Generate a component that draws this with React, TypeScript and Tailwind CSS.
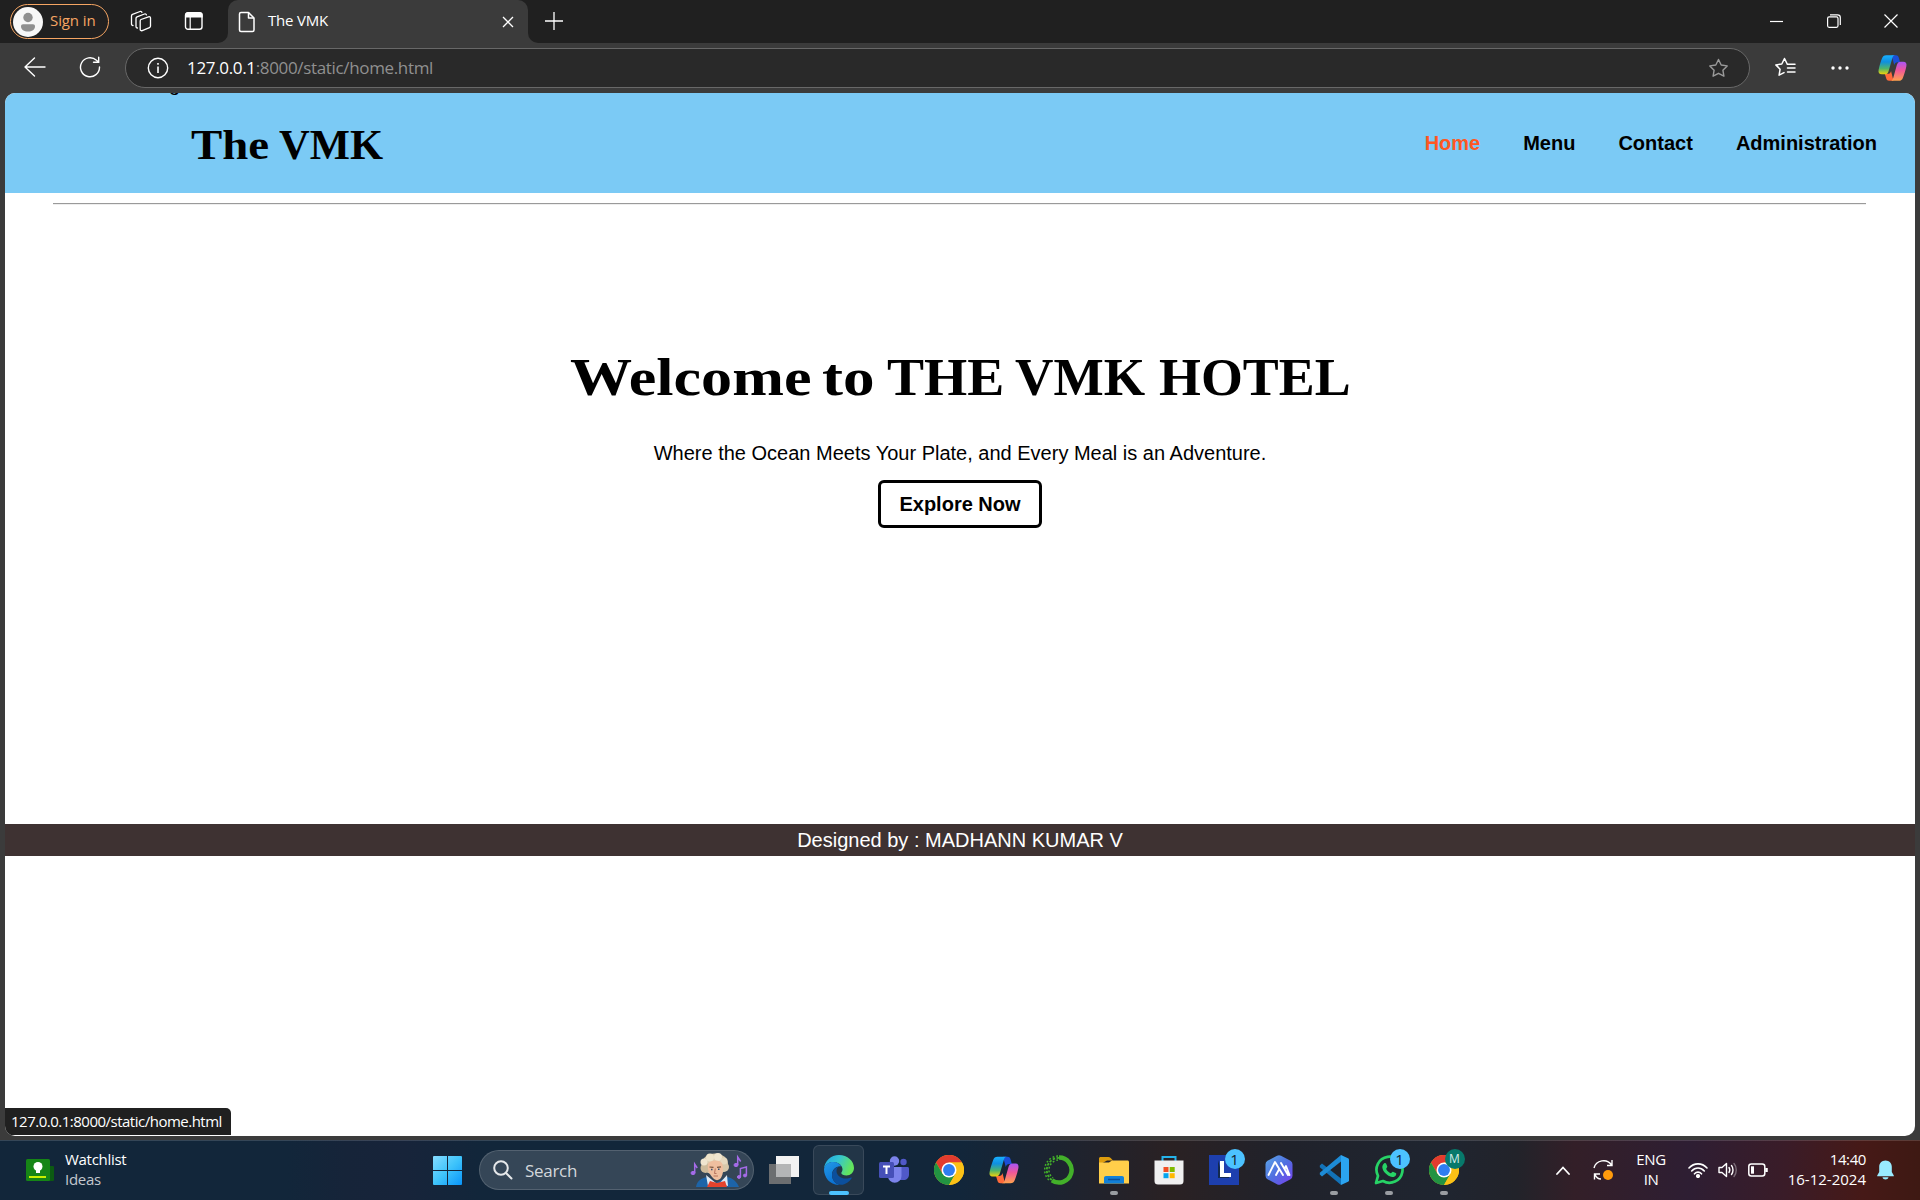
import React from "react";

const UI = "font-['Open_Sans','Noto_Sans',sans-serif]";

function Copilot({ id, className }: { id: string; className: string }) {
  return (
    <svg viewBox="0 0 30 28" className={className}>
      <defs>
        <linearGradient id={id + "a"} x1="0" y1="0" x2="0" y2="1">
          <stop offset="0" stopColor="#18b0ff" />
          <stop offset=".35" stopColor="#0f8fe0" />
          <stop offset=".7" stopColor="#4fb56a" />
          <stop offset="1" stopColor="#f0d20a" />
        </linearGradient>
        <linearGradient id={id + "b"} x1="0" y1="0" x2="0" y2="1">
          <stop offset="0" stopColor="#a855f7" />
          <stop offset=".45" stopColor="#f0569a" />
          <stop offset="1" stopColor="#ffa24d" />
        </linearGradient>
      </defs>
      <path d="M14 .8h4.500c2 0 2.700 1 3.200 3L22.800 8h-2.500c-2 0-3 1-3.500 3z" fill="#1b4fd8" />
      <path d="M16 27.200h-4.500c-2 0-2.700-1-3.200-3L7 20h3c2 0 3-1 3.500-3z" fill="#ff6a3a" />
      <path d="M8.500.8H18c-2 0-2.600 1.200-3.200 3.200l-3.800 13c-.7 2.300-1.700 3.500-4 3.500H4c-3 0-4-1.800-3.300-5C1.700 11 3 7 4.200 4 5 1.800 6.200.8 8.500.8z" fill={"url(#" + id + "a)"} />
      <path d="M21.500 27.200H12.500c2 0 2.700-1.200 3.300-3.200L19.500 11c.7-2.300 1.700-3.500 4-3.500H26c3 0 4 1.800 3.300 5-1 4.500-2.200 8.500-3.500 11.500-.9 2.200-2 3.200-4.300 3.200z" fill={"url(#" + id + "b)"} />
    </svg>
  );
}

function Chrome() {
  return (
    <svg viewBox="0 0 48 48" className="size-[30px]">
      <circle cx="24" cy="24" r="24" fill="#fbc116" />
      <path d="M24 12h20.800A24 24 0 0 0 3.200 12L13.600 30z" fill="#e33b2e" />
      <path d="M3.200 12A24 24 0 0 0 24 48L34.400 30 24 34 13.600 30z" fill="#229342" />
      <path d="M24 48A24 24 0 0 0 44.800 12H24l10.400 18z" fill="#fbc116" />
      <circle cx="24" cy="24" r="12" fill="#fff" />
      <circle cx="24" cy="24" r="9.500" fill="#2f7df0" />
    </svg>
  );
}

function Edge() {
  return (
    <svg viewBox="0 0 30 30" className="size-[30px]">
      <defs>
        <linearGradient id="eg1" x1="0" y1="0" x2="1" y2=".35">
          <stop offset="0" stopColor="#1fa5e6" />
          <stop offset=".5" stopColor="#35c5d0" />
          <stop offset="1" stopColor="#63e45c" />
        </linearGradient>
        <linearGradient id="eg2" x1="0" y1="0" x2=".5" y2="1">
          <stop offset="0" stopColor="#2299e8" />
          <stop offset="1" stopColor="#0a6fd0" />
        </linearGradient>
      </defs>
      <path d="M0 14C.5 6 7 0 15 0c8.500 0 15 6 15 13 0 4.500-3.500 7.500-7.500 7.500-3 0-5.200-1-5.200-2.400 0-1 1.200-1.500 1.200-3.600C18.500 10 14 7 9 7c-4.500 0-8 3-9 7z" fill="url(#eg1)" />
      <path d="M0 14C1 9.500 5 7 9 7c4 0 7 1.800 8.500 4.500-5 -1-9.500 3-9.500 8.500 0 4.500 3 8.500 7.500 10C6.500 30.300 0 23 0 14z" fill="url(#eg2)" />
      <path d="M14.500 11.500C11 13 8 16 8 20c0 5 4 9.800 9 9.800 4.500-.3 8.500-3 10.600-6.600.4-.7-.2-1-.7-.7-1.500.8-3.200 1.100-4.900 1.100-5.500 0-9.500-3.600-9.500-7.600 0-1.800.8-3.400 2-4.500z" fill="#0c4f9c" />
    </svg>
  );
}

function Teams() {
  return (
    <svg viewBox="0 0 30 28" className="h-[28px] w-[30px]">
      <circle cx="24.500" cy="6" r="3.200" fill="#5059c9" />
      <circle cx="15.500" cy="5" r="4.700" fill="#7b83eb" />
      <path d="M21 11h7.500c.8 0 1.500.7 1.500 1.500v6c0 3.500-2.400 5.500-5.500 5.500H21z" fill="#5059c9" />
      <path d="M9 11h13.500v9a6.700 6.700 0 0 1-13.500 0z" fill="#7b83eb" />
      <rect x="0" y="6" width="15" height="16" rx="1.500" fill="#4650b8" />
      <path d="M4 10.500h7M7.500 10.500v7.500" stroke="#fff" strokeWidth="2" />
    </svg>
  );
}

function Anaconda() {
  return (
    <svg viewBox="0 0 30 30" className="size-[30px]">
      <path d="M15 2.500A12.500 12.500 0 1 1 8 25.300" fill="none" stroke="#43b02a" strokeWidth="4.500" />
      <path d="M15 2.800A12.200 12.200 0 0 0 8 25" fill="none" stroke="#43b02a" strokeWidth="1.800" strokeDasharray="2.500 1.500" />
      <path d="M14 1A14 14 0 0 0 6 26M14 5A10 10 0 0 0 9 23" fill="none" stroke="#43b02a" strokeWidth="1.500" strokeDasharray="1.800 2" />
    </svg>
  );
}

function Folder() {
  return (
    <svg viewBox="0 0 30 28" className="h-[28px] w-[30px]">
      <path d="M0 2.500C0 1.500.8 1 1.800 1h7.500c1 0 1.700.3 2.400 1L14 4.500h-6L0 9z" fill="#dd9c0d" />
      <path d="M0 6.500h10L13 4.500h15.500c.9 0 1.500.6 1.500 1.500v21.500H0z" fill="#ffce4a" />
      <path d="M5 22c0-1.200.8-2 2-2h16c1.200 0 2 .8 2 2v5.500H5z" fill="#1280d8" />
      <path d="M9 23.500h12" stroke="#0a4f9a" strokeWidth="1.500" />
    </svg>
  );
}

function Store() {
  return (
    <svg viewBox="0 0 30 30" className="size-[30px]">
      <path d="M8.500 6V2h13v4" fill="none" stroke="#25b3ea" strokeWidth="2" />
      <path d="M.5 5.500h29V26a3.500 3.500 0 0 1-3.500 3.500H4A3.500 3.500 0 0 1 .5 26z" fill="#f0f0f0" />
      <path d="M9.500 12H14.500v5h-5z" fill="#f04e23" />
      <path d="M15.700 12h5v5h-5z" fill="#7fba00" />
      <path d="M9.500 18.200h5v5h-5z" fill="#05a4ef" />
      <path d="M15.700 18.200h5v5h-5z" fill="#ffb902" />
    </svg>
  );
}

function Lens() {
  return (
    <svg viewBox="0 0 30 30" className="size-[30px]">
      <path d="M0 0h30v30H0z" fill="#1d3fae" />
      <path d="M9 5v18h11v-3.500H13z" fill="#132a4e" />
      <path d="M11 6h4v12h7v4H11z" fill="#fff" />
    </svg>
  );
}

function Hexa() {
  return (
    <svg viewBox="0 0 30 30" className="size-[30px]">
      <defs>
        <linearGradient id="hx" x1="0" y1="0" x2="1" y2="1">
          <stop offset="0" stopColor="#5ca8e8" />
          <stop offset=".5" stopColor="#4f6fe0" />
          <stop offset="1" stopColor="#7a3ff0" />
        </linearGradient>
      </defs>
      <path d="M13 .8a4 4 0 0 1 4 0l9.500 5a4 4 0 0 1 2 3.500v11.400a4 4 0 0 1-2 3.500l-9.500 5a4 4 0 0 1-4 0l-9.500-5a4 4 0 0 1-2-3.500V9.300a4 4 0 0 1 2-3.500z" fill="url(#hx)" />
      <path d="m4.500 20 6.500-13 8 13M12 20l3-5.500M17 8l7 12M20.500 14l1.500-3 3.500 9" fill="none" stroke="#fff" strokeWidth="1.900" strokeLinejoin="round" strokeLinecap="round" />
    </svg>
  );
}

function Code() {
  return (
    <svg viewBox="0 0 30 30" className="size-[30px]">
      <path d="M.8 10.500 3 8.600l19 14.900V30L.8 12.300z" fill="#1272b8" />
      <path d="M.8 19.500 3 21.400 22 6.500V0L.8 17.700z" fill="#1d8bd6" />
      <path d="M22 0l7 3.200c.6.300 1 .8 1 1.500v20.600c0 .7-.4 1.200-1 1.500L22 30z" fill="#2ba4f0" />
    </svg>
  );
}

function Whatsapp() {
  return (
    <svg viewBox="0 0 30 30" className="size-[30px]">
      <path d="M2 28l2-7.200A13 13 0 1 1 9 26z" fill="none" stroke="#27d366" strokeWidth="2.700" strokeLinejoin="round" />
      <path d="M10 8.500c.8-.8 1.800-.6 2.200.3l1.100 2.600c.3.700-1.300 2-1.100 2.500 1 2 2.500 3.400 4.500 4.300.6.200 1.600-1.800 2.200-1.500l2.800 1.300c.7.400.7 1 .3 1.900-.7 1.500-2.300 2.200-3.900 2-5-.7-9.500-5.500-9.800-9.600 0-1.500.6-2.800 1.700-3.800z" fill="#27d366" />
    </svg>
  );
}

function Composer() {
  return (
    <svg viewBox="0 0 58 34" className="h-[34px] w-[58px]">
      <path d="M6 34c1-6 5-9 11-10l9 6 11-6c6 1 10 5 12 10z" fill="#1d64a8" />
      <path d="M16 22l11 9-9 2zM37 22l-8 9 9 2z" fill="#dfeaf5" />
      <path d="M20 28l7 2 8-2 2 6H17z" fill="#e5432d" />
      <ellipse cx="25" cy="11" rx="13" ry="10.500" fill="#dccdb0" />
      <circle cx="15.500" cy="15" r="5" fill="#cdbb9b" />
      <circle cx="34" cy="14" r="5" fill="#d8c8aa" />
      <circle cx="20" cy="4.500" r="4" fill="#eee3ca" />
      <circle cx="28" cy="4" r="4" fill="#efe5cf" />
      <circle cx="14" cy="9" r="3.500" fill="#efe5cf" />
      <circle cx="34" cy="8" r="3.500" fill="#e6d9bf" />
      <path d="M18 11c2-4 10-5 14-1 2 6 1 13-2 16-2 1.500-4 1.500-6 0-4-4-7-8-6-15z" fill="#efbf9f" />
      <path d="M19.500 14l4 .4M27 14.400l4-.6" stroke="#75513c" strokeWidth="1.200" />
      <path d="M21 16.500h1.500M28 16.300h1.500" stroke="#375070" strokeWidth="1.400" />
      <path d="M25.300 15.500l-.8 5H26.500M23.500 23h4.500" stroke="#b9745d" strokeWidth="1" fill="none" />
      <g fill="#a56be8" stroke="#a56be8">
        <ellipse cx="3" cy="20" rx="2" ry="1.600" />
        <path d="M4.700 20v-9l2.500 4" fill="none" strokeWidth="1.500" />
        <ellipse cx="46" cy="12" rx="2" ry="1.600" />
        <path d="M47.700 12V4l3 4.500" fill="none" strokeWidth="1.500" />
        <ellipse cx="49" cy="24" rx="1.600" ry="1.400" />
        <ellipse cx="55" cy="22.500" rx="1.600" ry="1.400" />
        <path d="M50.400 24v-8.500l6-1.500v8.500" fill="none" strokeWidth="1.500" />
      </g>
    </svg>
  );
}

function TaskItem({ children, running, active }: { children?: React.ReactNode; running?: boolean; active?: boolean }) {
  return (
    <div className="relative flex h-[57px] w-[55px] items-center justify-center">
      {active && <div className="absolute left-[2px] top-[3px] h-[50px] w-[51px] rounded-md border border-white/10 bg-white/[0.07]" />}
      <div className="relative flex">{children}</div>
      {active && <div className="absolute bottom-[4px] h-[4px] w-[20px] rounded-full bg-[#4cc2ff]" />}
      {running && <div className="absolute bottom-[4px] h-[4px] w-[8px] rounded-full bg-[#9a9da2]" />}
    </div>
  );
}

function Count() {
  return (
    <span className="absolute -top-[6px] left-[16px] flex size-[20px] items-center justify-center rounded-full bg-[#4cc2ff] text-[15px] leading-none text-[#10202c]">
      1
    </span>
  );
}

function TabStrip() {
  return (
    <div className="flex h-[43px] shrink-0 bg-[#202020] text-white">
      <div className="ml-[10px] mt-[4px] flex h-[35px] w-[99px] items-center rounded-full border-[1.500px] border-[#f5a563] pl-[2px]">
        <svg viewBox="0 0 30 30" className="size-[30px]">
          <circle cx="15" cy="15" r="15" fill="#f7f7f7" />
          <circle cx="15" cy="10.500" r="4.700" fill="#8f8f8f" />
          <path d="M8 19.500c0-1.400.8-2.200 2-2.200h10c1.200 0 2 .8 2 2.200 0 3-3 5-7 5s-7-2-7-5z" fill="#8f8f8f" />
        </svg>
        <span className="-mt-[2px] ml-[7px] text-[15px] leading-none tracking-[-0.1px] text-[#f5a563]">Sign in</span>
      </div>
      <svg viewBox="0 0 22 22" className="ml-[21px] mr-px mt-[10px] size-[22px] fill-none stroke-white" strokeWidth="1.300" strokeLinejoin="round" strokeLinecap="round">
        <path d="m11 9.500 7.500-2.700c1-.3 2 .2 2 1.200v8c0 .8-.3 1.300-1 1.600l-7.300 3c-1 .4-2-.2-2-1.200v-8.200c0-.8.1-1.400.8-1.700z" />
        <path d="M7.500 18C6.500 18 6 17.300 6 16.400V8.500c0-.8.300-1.400 1-1.700L14.500 4c.8-.3 1.700 0 1.900.8" />
        <path d="M3 15.500c-1 0-1.500-.7-1.500-1.600V6c0-.8.300-1.400 1-1.700L10 1.500c.8-.3 1.700 0 1.900.8" />
      </svg>
      <svg viewBox="0 0 20 20" className="ml-[31px] mt-[11px] size-[20px] fill-none stroke-white" strokeWidth="1.400">
        <rect x="1.500" y="1.800" width="16.500" height="16.500" rx="2.500" />
        <path d="M2 3.500C2 2.500 3 2 4 2h11.500c1.500 0 2.500.8 2.500 2v1.800H2z" fill="white" />
        <path d="M6.200 6v12" strokeWidth="1.200" />
      </svg>
      <div className="ml-[14px] flex h-[43px] w-[10px] items-end bg-[#3b3b3b]">
        <div className="h-full w-full rounded-br-[10px] bg-[#202020]" />
      </div>
      <div className="flex h-[43px] w-[300px] items-center rounded-t-[10px] bg-[#3b3b3b] pl-[10px]">
        <svg viewBox="0 0 18 22" className="h-[22px] w-[18px] fill-none stroke-white" strokeWidth="1.500" strokeLinejoin="round">
          <path d="M3 1.500h7.500L16 7v12c0 1-.6 1.500-1.500 1.500H3c-1 0-1.500-.6-1.500-1.500V3c0-1 .6-1.500 1.500-1.500z" />
          <path d="M10.500 1.500V7H16" />
        </svg>
        <span className="-mt-[2px] ml-[12px] w-[234px] text-[15px] leading-none tracking-[-0.2px]">The VMK</span>
        <svg viewBox="0 0 12 12" className="size-[12px] stroke-white" strokeWidth="1.300">
          <path d="m1 1 10 10M11 1 1 11" />
        </svg>
      </div>
      <div className="h-[43px] w-[10px] bg-[#3b3b3b]">
        <div className="h-full w-full rounded-bl-[10px] bg-[#202020]" />
      </div>
      <svg viewBox="0 0 18 18" className="ml-[7px] mt-[12px] size-[18px] stroke-white" strokeWidth="1.300">
        <path d="M9 0v18M0 9h18" />
      </svg>
      <div className="ml-auto mr-[22px] flex h-[42px] items-center">
        <svg viewBox="0 0 14 14" className="size-[14px] stroke-white" strokeWidth="1.200"><path d="M0 7.500h13" /></svg>
        <svg viewBox="0 0 14 14" className="ml-[43px] size-[14px] fill-none stroke-white" strokeWidth="1.200">
          <rect x=".6" y="2.900" width="10.400" height="10.400" rx="1.500" />
          <path d="M3 .8h7.500C12.300.8 13.300 1.800 13.300 3.500V11" />
        </svg>
        <svg viewBox="0 0 14 14" className="ml-[43px] size-[14px] stroke-white" strokeWidth="1.200"><path d="m.5.5 13 13M13.500.5l-13 13" /></svg>
      </div>
    </div>
  );
}

const STAR = "M10.500 1.500 13.200 7l6 .9-4.300 4.300 1 6-5.400-2.900-5.400 2.900 1-6L1.800 7.900l6-.9z";

function Toolbar() {
  return (
    <div className="flex h-[50px] shrink-0 bg-[#3b3b3b]">
      <svg viewBox="0 0 22 20" className="ml-[24px] mt-[14px] h-[20px] w-[22px] fill-none stroke-white" strokeWidth="1.400" strokeLinecap="round" strokeLinejoin="round">
        <path d="M10.500 1 1 10l9.500 9M1 10h20" />
      </svg>
      <svg viewBox="0 0 22 22" className="ml-[33px] mt-[13px] size-[22px] fill-none stroke-white" strokeWidth="1.400" strokeLinecap="round">
        <path d="M20.500 11A9.500 9.500 0 1 1 17.500 4.300L19.500 6M19.700 1.200V6.300H14.500" />
      </svg>
      <div className="ml-[24px] mt-[5px] flex h-[40px] w-[1625px] items-center rounded-full border border-[#686868] bg-[#292929] pl-[21px] pr-[20px]">
        <svg viewBox="0 0 22 22" className="size-[22px] fill-none stroke-white" strokeWidth="1.400">
          <circle cx="11" cy="11" r="9.700" />
          <path d="M11 9.500V16M11 6v1.800" strokeWidth="1.600" />
        </svg>
        <span className="-mt-[2px] ml-[18px] text-[17px] leading-none tracking-[-0.34px] text-[#909090]"><span className="text-white">127.0.0.1</span>:8000/static/home.html</span>
        <svg viewBox="0 0 21 20" className="ml-auto h-[20px] w-[21px] fill-none stroke-[#9a9a9a]" strokeWidth="1.400" strokeLinejoin="round"><path d={STAR} /></svg>
      </div>
      <svg viewBox="0 0 22 20" className="ml-[24px] mt-[14px] h-[20px] w-[22px] fill-none stroke-white" strokeWidth="1.500" strokeLinejoin="round" strokeLinecap="round">
        <path d="M13.200 7 10.500 1.500 7.800 7l-6 .9 4.300 4.300-1 6L10 15.600M13.500 11H21M13.500 15H21M13.200 7.200H21" />
      </svg>
      <svg viewBox="0 0 18 4" className="ml-[35px] mt-[23px] h-[4px] w-[18px] fill-white">
        <circle cx="2" cy="2" r="1.700" /><circle cx="9" cy="2" r="1.700" /><circle cx="16" cy="2" r="1.700" />
      </svg>
      <Copilot id="ct" className="ml-[29px] mt-[11px] h-[28px] w-[29px]" />
    </div>
  );
}

function Page() {
  return (
    <main className="relative mx-[5px] h-[1043px] shrink-0 overflow-hidden rounded-[10px] bg-white font-['Liberation_Sans',sans-serif] text-[20px] leading-[23px] text-black">
      <header className="flex h-[100px] items-center justify-between bg-[#7bcaf5] pl-[186px] pr-[38px]">
        <h1 className="mt-[4px] flex w-[193px] whitespace-nowrap font-['Liberation_Serif',serif] text-[42px] font-bold leading-[48px]">
          <span className="w-[88px] origin-left scale-x-[1.115]">The </span>
          <span className="origin-left scale-x-[1.014]">VMK</span>
        </h1>
        <nav className="flex gap-[43px] font-bold">
          <a className="text-[#ff5722]">Home</a>
          <a>Menu</a>
          <a>Contact</a>
          <a>Administration</a>
        </nav>
      </header>
      <span className="absolute -top-[20px] left-[164px] leading-[23px]">g</span>
      <hr className="ml-[48px] mr-[49px] mt-[10px] h-[2px] border-b border-t border-b-[#eeeeee] border-t-[#9a9a9a]" />
      <section className="flex flex-col items-center">
        <h2 className="mt-[142px] flex w-[780px] whitespace-nowrap font-['Liberation_Serif',serif] text-[53px] font-bold leading-[60px]">
          <span className="w-[252px] origin-left scale-x-[1.172]">Welcome </span>
          <span className="w-[65px] origin-left scale-x-[1.19]">to </span>
          <span className="w-[128px] origin-left scale-x-[1.048]">THE </span>
          <span className="w-[144px] origin-left scale-x-[1.004]">VMK </span>
          <span className="origin-left scale-x-[1.017]">HOTEL</span>
        </h2>
        <p className="mt-[35px]">Where the Ocean Meets Your Plate, and Every Meal is an Adventure.</p>
        <button className="mt-[15px] h-[48px] w-[164px] rounded-[6px] border-[3px] border-black font-bold">Explore Now</button>
      </section>
      <footer className="mt-[296px] flex h-[32px] items-center justify-center bg-[#3e3232] text-white">Designed by : MADHANN KUMAR V</footer>
      <div className="absolute bottom-[1px] left-0 flex h-[27px] w-[226px] items-center rounded-tr-[5px] bg-[#202020] pb-px pl-[6px] font-['Open_Sans',sans-serif] text-[15px] leading-none tracking-[-0.5px] text-white">
        <span>127.0.0.1:8000/static/home.html</span>
      </div>
    </main>
  );
}

function Taskbar() {
  return (
    <div className="flex h-[60px] shrink-0 items-center border-t border-white/15 bg-[linear-gradient(90deg,#12263a_0%,#12263a_15%,#162439_18%,#17243a_21%,#12263a_25%,#12263a_50%,#23222a_58%,#2a2123_61%,#20222b_67%,#1f2530_75%,#22232a_79%,#331f28_82%,#2e1e33_88%,#3a1c28_93%,#461917_97%,#3e1913_100%)] pb-px text-[15px] leading-[20px] text-white">
      <svg viewBox="0 0 28 22" className="mb-px ml-[26px] h-[22px] w-[28px]">
        <rect x="22" y="7" width="6" height="15" rx="1" fill="#0c5a12" />
        <rect width="24" height="22" rx="1.500" fill="#168516" />
        <circle cx="12" cy="7.500" r="4.500" fill="#fff" />
        <path d="M10 10h4v4h-4z" fill="#fff" />
        <path d="M3 17h17v2H3z" fill="#c8f000" />
      </svg>
      <div className="-mt-[2px] ml-[11px] w-[368px] tracking-[-0.3px]"><div>Watchlist</div><div className="text-[#c3c8ce]">Ideas</div></div>
      <svg viewBox="0 0 29 29" className="size-[29px]">
        <defs><linearGradient id="win" x1="0" y1="0" x2="1" y2="1"><stop offset="0" stopColor="#85dcff" /><stop offset=".5" stopColor="#3fc4fb" /><stop offset="1" stopColor="#0995fa" /></linearGradient></defs>
        <path d="M0 1q0-1 1-1h13v14H0zM15 0h13q1 0 1 1v13H15zM0 15h14v14H1q-1 0-1-1zM15 15h14v13q0 1-1 1H15z" fill="url(#win)" />
      </svg>
      <div className="ml-[17px] flex h-[40px] w-[275px] items-center rounded-full border border-white/15 bg-white/15 pl-[13px] pr-[5px]">
        <svg viewBox="0 0 20 20" className="size-[20px] fill-none stroke-[#e6e8ea]" strokeWidth="2" strokeLinecap="round"><circle cx="8" cy="8" r="6.800" /><path d="m13 13 5.500 5.500" /></svg>
        <span className="ml-[12px] mt-px text-[17px] tracking-[-0.3px] text-[#d3d7db]">Search</span>
        <div className="-mt-px ml-auto"><Composer /></div>
      </div>
      <div className="ml-[2px] flex">
        <TaskItem>
          <svg viewBox="0 0 30 28" className="h-[28px] w-[30px]"><path d="M0 8h22v20H0z" fill="#6c6e70" /><path d="M7 0h23v21H7z" fill="#f2f2f2" /><path d="M7 8h15v13H7z" fill="#b4b5b6" /></svg>
        </TaskItem>
        <TaskItem active><Edge /></TaskItem>
        <TaskItem><Teams /></TaskItem>
        <TaskItem><Chrome /></TaskItem>
        <TaskItem><Copilot id="cb" className="h-[28px] w-[30px]" /></TaskItem>
        <TaskItem><Anaconda /></TaskItem>
        <TaskItem running><Folder /></TaskItem>
        <TaskItem><Store /></TaskItem>
        <TaskItem><Lens /><Count /></TaskItem>
        <TaskItem><Hexa /></TaskItem>
        <TaskItem running><Code /></TaskItem>
        <TaskItem running><Whatsapp /><Count /></TaskItem>
        <TaskItem running>
          <Chrome />
          <span className="absolute -top-[6px] left-[16px] flex size-[20px] items-center justify-center rounded-full bg-[#07796b] text-[12px] leading-none text-[#d5ebe7]">M</span>
        </TaskItem>
      </div>
      <svg viewBox="0 0 14 9" className="ml-[85px] h-[9px] w-[14px] fill-none stroke-white" strokeWidth="1.800" strokeLinecap="round"><path d="m1 8 6-6.500L13 8" /></svg>
      <svg viewBox="0 0 21 22" className="ml-[23px] h-[22px] w-[21px] fill-none stroke-white" strokeWidth="1.400">
        <path d="M1 9C3 1 14-1 18.500 6M19 1v5.500h-5M8 20c-3 0-5-2-6-4.500M1.500 20.500V15H7" />
        <circle cx="15" cy="16" r="5" fill="#ff9b0c" stroke="none" />
      </svg>
      <div className="-mt-[2px] ml-[19px] flex w-[36px] flex-col items-center tracking-[-0.4px]"><span>ENG</span><span>IN</span></div>
      <svg viewBox="0 0 20 16" className="ml-[19px] h-[16px] w-[20px] fill-none stroke-white" strokeWidth="1.600" strokeLinecap="round">
        <path d="M1 6c5-5.500 13-5.500 18 0M3.700 9c3.600-4 9-4 12.600 0M6.500 11.800c2-2.200 5-2.200 7 0" /><circle cx="10" cy="14" r="1.300" fill="white" />
      </svg>
      <svg viewBox="0 0 20 16" className="ml-[10px] h-[16px] w-[20px] fill-none stroke-white" strokeWidth="1.400" strokeLinejoin="round" strokeLinecap="round">
        <path d="M1 5.500h3l4.500-4v13L4 10.500H1zM11 5.500c1 1.500 1 3.500 0 5M13.500 3.500c2 2.500 2 6.500 0 9" /><path d="M16 1.500c3 3.500 3 9.500 0 13" opacity=".35" />
      </svg>
      <svg viewBox="0 0 20 14" className="ml-[10px] h-[14px] w-[20px] fill-none stroke-white" strokeWidth="1.500">
        <rect x=".8" y="1" width="16" height="12" rx="2.500" /><rect x="3" y="3.300" width="3" height="7.400" fill="white" stroke="none" /><path d="M18.500 5v4" strokeWidth="2.500" />
      </svg>
      <div className="-mt-[2px] ml-[10px] flex w-[88px] flex-col items-end whitespace-nowrap tracking-[0]"><span className="tracking-[-0.4px]">14:40</span><span>16-12-2024</span></div>
      <svg viewBox="0 0 17 20" className="ml-[11px] h-[20px] w-[17px] fill-[#99ebff]"><path d="M8.500.5c3.700 0 6.300 2.800 6.300 6.300V12l2 3.500v.8H.2v-.8l2-3.500V6.800C2.200 3.300 4.800.5 8.500.5zM5.500 17.200h6c-.5 3-5.500 3-6 0z" /></svg>
    </div>
  );
}

export default function App() {
  return (
    <div className={"flex h-[1200px] w-[1920px] flex-col overflow-hidden bg-[#3b3b3b] " + UI}>
      <TabStrip />
      <Toolbar />
      <Page />
      <div className="h-[4px] shrink-0" />
      <Taskbar />
    </div>
  );
}
